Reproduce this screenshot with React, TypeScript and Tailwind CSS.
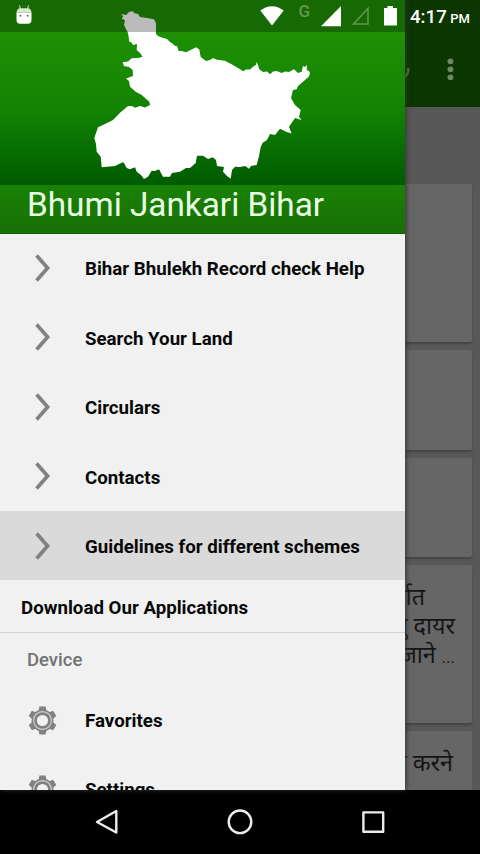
import React from "react";

const mapPath =
  "M121 14L126 15L129 12L132.7 11L134 13L138 14L140 17L147 18L154 19.3L156 23L156 34L158 36L161.7 37.5L167 39L170 42L173 44L175 46L177 46L178.7 51L182 51L186 52.3L191.7 49.5L196 47.3L199.3 49.5L200.7 57L206 61L210 60L213 58L217 59.7L225 60.7L233 65L243.3 71.3L246 69.5L250 69.5L254 66L256 65L256.7 62L258 65L259.3 69.3L263 72L267 71.5L270 74.3L273 71.5L276.7 71L281.7 73L285 71.5L289 72L294 69.3L298 73L301.7 71.7L303 66L305 67L307 65L306.7 70L309 71L310 73L309 76.5L305 80L298 86L296.7 89.3L293 90L291 98L295 105L300.7 110L299 116.7L301.5 120L295 118L289 126.7L291.5 133.5L286.7 132L280 128.7L275 135L270 134L267 140L262.7 142.7L260.7 147L259 156L256.7 165L251 166L249 168.7L245 166L240 167L235 166.7L232 170L230.7 178.7L227 176L223 171.7L224 167L217 166L216 160L212.7 157.3L208 159L203 155.7L197 155.7L195.7 163L190 168L186 168L180 171.7L172 173L170 176.7L163 176.7L159 169.3L155 171L151.7 170.7L148 176.7L144 179L141 175L136.7 171.7L135 167.3L130 169.3L126.7 168L124 163L122.7 162.3L115 166L101.7 167.3L100.7 156.7L96.7 151.7L96 144L94.3 138L98 127.3L105 124L113 120L120 112.7L128 106L132 106L135 107.7L140 106L145 107.5L150 105L149.3 101.7L141.7 95L136 92L130 86.7L129 81L126 78.5L133 76L132.7 70L129 67L124 66L122.7 62.3L128 61.5L131.7 58.3L138 58L142.7 56.7L140 53L136.7 50L137 44L133 45L131 42L129.3 41.7L128 33L124 25L125 20L122 19L123 16Z";

function Chevron() {
  return (
    <svg className="ml-[33px] w-[20px] h-[30px] shrink-0" viewBox="0 0 20 30" fill="none" stroke="#818181" strokeWidth="3.7">
      <path d="M3.6 2.6L14.6 15L3.6 27.4" />
    </svg>
  );
}

function Gear() {
  return (
    <svg className="ml-[28px] w-[29px] h-[29px] shrink-0" viewBox="-15 -15 30 30" fill="none">
      <g fill="#818181">
        {[0, 60, 120, 180, 240, 300].map((a) => (
          <path key={a} transform={`rotate(${a})`} d="M-3.2 -14.6H3.2L4.2 -9H-4.2Z" />
        ))}
        <circle r="11.3" />
      </g>
      <circle r="9.2" stroke="#d6d6d6" strokeWidth="1.1" />
      <circle r="5.8" fill="#f1f1f1" />
    </svg>
  );
}

function Item({ label, active = false }: { label: string; active?: boolean }) {
  return (
    <div className={active ? "flex h-[69.4px] shrink-0 items-center bg-[#dadada]" : "flex h-[69.4px] shrink-0 items-center"}>
      <Chevron />
      <span className="ml-[32px] whitespace-nowrap pt-[2.6px]">{label}</span>
    </div>
  );
}

function GearItem({ label }: { label: string }) {
  return (
    <div className="flex h-[69px] shrink-0 items-center">
      <Gear />
      <span className="ml-[28px] pt-[1px]">{label}</span>
    </div>
  );
}

function StatusBar() {
  return (
    <div className="absolute inset-x-0 top-0 flex h-8">
      <div className="w-[405px] bg-black/27" />
      <svg className="absolute left-0 top-0" width="406" height="32" viewBox="0 0 406 32">
        <path d="M19.5 5.5L20.5 9M28.5 5.5L27.5 9" stroke="#dceeda" strokeWidth="1" />
        <path d="M16.5 12.5Q17 8.5 20 8.3H28Q31 8.5 31.5 12.5Z" fill="#d5e8d0" />
        <path d="M16.5 12.5H31.5V20Q31.5 23.7 28 23.7H20Q16.5 23.7 16.5 20Z" fill="#fff" />
        <circle cx="20.4" cy="15.8" r="1" fill="#54804c" />
        <circle cx="27.7" cy="15.8" r="1" fill="#54804c" />
        <path d="M260.3 10.5Q272 2 283.7 10.5L272 25.5Z" fill="#fff" />
        <path d="M341 6V26.3H321Z" fill="#fff" />
        <path d="M368 8.5V24H353.5Z" fill="none" stroke="#5f9a4d" strokeWidth="1.5" />
        <path d="M384 8H387.5V6H393V8H397V25.5H384Z" fill="#fff" />
      </svg>
      <span className="absolute left-[298.5px] top-[2px] text-[17px] leading-[19px] font-medium text-[#5f9a4d]">G</span>
      <div className="flex items-baseline pl-[5px] text-[18.7px] leading-[35px] font-medium text-white whitespace-nowrap">
        4:17<span className="ml-[3.5px] text-[13px]">PM</span>
      </div>
    </div>
  );
}

function Page() {
  return (
    <div className="flex h-[790px] flex-col overflow-hidden bg-[#585858]">
      <div className="flex h-[107px] shrink-0 items-end justify-end bg-[#0c3600]">
        <svg className="h-[75px] w-[80px]" viewBox="400 32 80 75">
          <path d="M402 79Q408.5 76 408.3 68" fill="none" stroke="#4f7547" strokeWidth="2.6" />
          <g fill="#6e8868">
            <circle cx="450.5" cy="61.3" r="2.9" />
            <circle cx="450.5" cy="69.3" r="2.9" />
            <circle cx="450.5" cy="77.3" r="2.9" />
          </g>
        </svg>
      </div>
      <div className="flex flex-col gap-[8px] px-2 pt-[77px] text-right text-[23.3px] leading-[29px] text-[#151515]">
        <div className="h-[158px] shrink-0 rounded-[2px] bg-[#666] shadow-[0_2px_2px_#454545]" />
        <div className="h-[99.5px] shrink-0 rounded-[2px] bg-[#666] shadow-[0_2px_2px_#454545]" />
        <div className="h-[99.5px] shrink-0 rounded-[2px] bg-[#666] shadow-[0_2px_2px_#454545]" />
        <div className="h-[158px] shrink-0 rounded-[2px] bg-[#666] pr-[17px] pt-[18px] shadow-[0_2px_2px_#454545]">
          <p className="pr-[30px]">अंतर्गत</p>
          <p>हेतु दायर</p>
          <p>
            जाने <span className="text-[17px]">...</span>
          </p>
        </div>
        <div className="h-[158px] shrink-0 rounded-[2px] bg-[#666] pr-[19px] pt-[18px]">
          <p>का करने</p>
        </div>
      </div>
    </div>
  );
}

function Drawer() {
  return (
    <div className="absolute left-0 top-0 flex h-[790px] w-[405px] flex-col overflow-hidden bg-[#f1f1f1] text-[18.7px] font-bold text-[#080808] shadow-[1px_0_5px_#333]">
      <div className="flex h-[233.4px] shrink-0 flex-col">
        <div className="h-8 shrink-0 bg-[#209006]" />
        <div className="h-[153px] shrink-0 bg-linear-to-b from-[#1e9005] via-[#128402] via-50% to-[#005b00]" />
        <div className="flex grow items-center border-b border-[#12600a] bg-linear-to-b from-[#198205] to-[#196f06] pl-[27px]">
          <h1 className="pb-[9px] text-[33.3px] leading-[39px] font-normal text-[#e9ffe4] whitespace-nowrap">Bhumi Jankari Bihar</h1>
        </div>
      </div>
      <svg className="absolute left-0 top-0" width="405" height="190" viewBox="0 0 405 190">
        <path d={mapPath} fill="#fff" />
      </svg>
      <Item label="Bihar Bhulekh Record check Help" />
      <Item label="Search Your Land" />
      <Item label="Circulars" />
      <Item label="Contacts" />
      <Item label="Guidelines for different schemes" active />
      <div className="flex h-[52.5px] shrink-0 items-center border-b border-[#d3d3d3] pl-[21px] pt-[3px]">Download Our Applications</div>
      <div className="flex h-[53px] shrink-0 items-center pl-[27px] pt-[3px] text-[18.5px] font-medium text-[#737373]">Device</div>
      <GearItem label="Favorites" />
      <GearItem label="Settings" />
    </div>
  );
}

export default function App() {
  return (
    <div className="relative h-[854px] w-[480px] overflow-hidden bg-black font-[Roboto,'Noto_Sans',sans-serif]">
      <Page />
      <Drawer />
      <StatusBar />
      <nav className="flex h-16 items-center bg-black">
        <svg width="480" height="64" viewBox="0 790 480 64" fill="none" stroke="#ececec" strokeWidth="2.4" strokeLinejoin="round">
          <path d="M116.3 811V832.5L97 822Z" />
          <circle cx="240" cy="821.8" r="11.3" />
          <rect x="363.4" y="812.4" width="19.8" height="19.4" />
        </svg>
      </nav>
    </div>
  );
}
